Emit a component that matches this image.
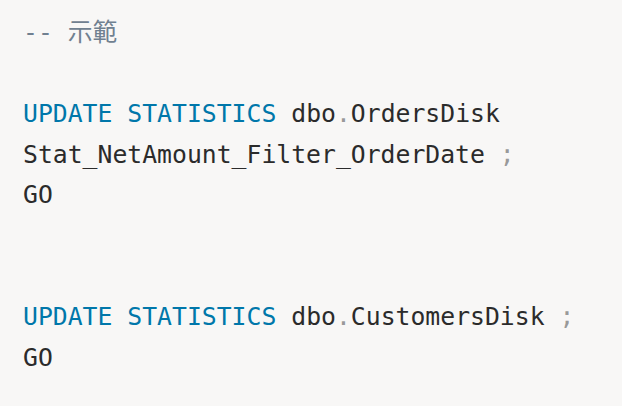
import React from 'react';

const Kw = ({ children }) => <span className="text-[#0077aa]">{children}</span>;
const P = ({ children }) => <span className="text-[#999999]">{children}</span>;

export default function App() {
  return (
    <div className="w-[622px] h-[406px] bg-[#f8f7f6] overflow-hidden">
      <pre
        className="pl-[23px] pt-[13px] text-[24.75px] leading-[40.6px] text-[#2b2b2b]"
        style={{ fontFamily: '"DejaVu Sans Mono", "Noto Sans CJK TC", monospace' }}
      >
        <span className="text-[#708090]">-- 示範</span>
        {'\n\n'}
        <Kw>UPDATE</Kw> <Kw>STATISTICS</Kw> dbo<P>.</P>OrdersDisk
        {'\n'}Stat_NetAmount_Filter_OrderDate <P>;</P>
        {'\n'}GO
        {'\n\n\n'}
        <Kw>UPDATE</Kw> <Kw>STATISTICS</Kw> dbo<P>.</P>CustomersDisk <P>;</P>
        {'\n'}GO
      </pre>
    </div>
  );
}
